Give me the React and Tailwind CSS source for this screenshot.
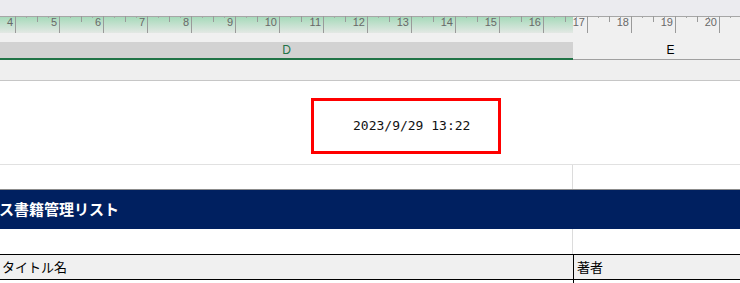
import React from 'react';

const jp = { fontFamily: '"Noto Sans CJK JP", "Noto Sans", sans-serif' };

function Ruler() {
  const majors = [];
  for (let k = 0; k < 17; k++) majors.push({ x: 15 + 44 * k, n: 4 + k });
  return (
    <svg width="740" height="17" className="block">
      <defs>
        <linearGradient id="rg" x1="0" y1="0" x2="0" y2="1">
          <stop offset="0" stopColor="#a3d9b8" />
          <stop offset="1" stopColor="#e3e8e4" />
        </linearGradient>
      </defs>
      <rect x="0" y="0" width="740" height="17" fill="#f0f0f0" />
      <rect x="0" y="0" width="573" height="17" fill="url(#rg)" />
      <line x1="0" y1="0.5" x2="740" y2="0.5" stroke="#a6a6a6" />
      {majors.map((m) => (
        <g key={m.n}>
          <line x1={m.x + 0.5} y1="0" x2={m.x + 0.5} y2="17" stroke="#9a9a9a" />
          <line x1={m.x + 22.5} y1="0" x2={m.x + 22.5} y2="6" stroke="#9a9a9a" />
          <line x1={m.x + 11.5} y1="0" x2={m.x + 11.5} y2="2" stroke="#a6a6a6" />
          <line x1={m.x + 33.5} y1="0" x2={m.x + 33.5} y2="2" stroke="#a6a6a6" />
          <text
            x={m.x - 2}
            y="10"
            textAnchor="end"
            fontSize="11"
            fill="#686868"
            fontFamily="'Liberation Sans', Arial, sans-serif"
          >
            {m.n}
          </text>
        </g>
      ))}
    </svg>
  );
}

export default function App() {
  return (
    <div className="w-[740px] h-[283px] overflow-hidden flex flex-col bg-[#f0f0f0]" style={jp}>
      <div className="h-[16px] bg-[#ebebef]" />
      <Ruler />
      <div className="h-[9px] bg-[#f0f0f0]" />
      <div className="flex h-[18px] text-[12px] leading-[16px]" style={{ fontFamily: '"Liberation Sans", Arial, sans-serif' }}>
        <div className="w-[573px] bg-[#d2d2d2] border-b-2 border-[#217346] text-center text-[#217346]">D</div>
        <div className="flex-1 bg-[#f0f0f0] border-b border-[#a0a0a0] text-center text-black pl-[28px]">E</div>
      </div>
      <div className="h-[21px] bg-[#efefef] border-b border-[#c6c6c6]" />
      <div className="flex-1 bg-white flex flex-col">
        <div className="h-[84px] border-b border-[#e1e1e1] pt-[17px] pl-[311px]">
          <div
            className="w-[190px] h-[56px] border-[3px] border-[#ff0000] flex items-center pl-[39px] text-[13px] text-[#111]"
            style={{ fontFamily: '"DejaVu Sans Mono", "Liberation Mono", monospace' }}
          >
            2023/9/29 13:22
          </div>
        </div>
        <div className="h-[25px] border-b border-[#8c8c8c] flex">
          <div className="w-[573px] border-r border-[#dcdcdc]" />
        </div>
        <div className="h-[39px] bg-[#002060] flex items-center text-white font-bold text-[15px]">
          <span className="ml-[-1px]">ス書籍管理リスト</span>
        </div>
        <div className="h-[25px] flex">
          <div className="w-[573px] border-r border-[#dcdcdc]" />
        </div>
        <div className="h-[26px] flex bg-[#f0f0f0] border-t border-b border-black text-[13px] text-black leading-[24px]">
          <div className="w-[574px] border-r border-black pl-[2px]">タイトル名</div>
          <div className="flex-1 pl-[3px]">著者</div>
        </div>
        <div className="flex-1 flex">
          <div className="w-[574px] border-r border-black" />
        </div>
      </div>
    </div>
  );
}
